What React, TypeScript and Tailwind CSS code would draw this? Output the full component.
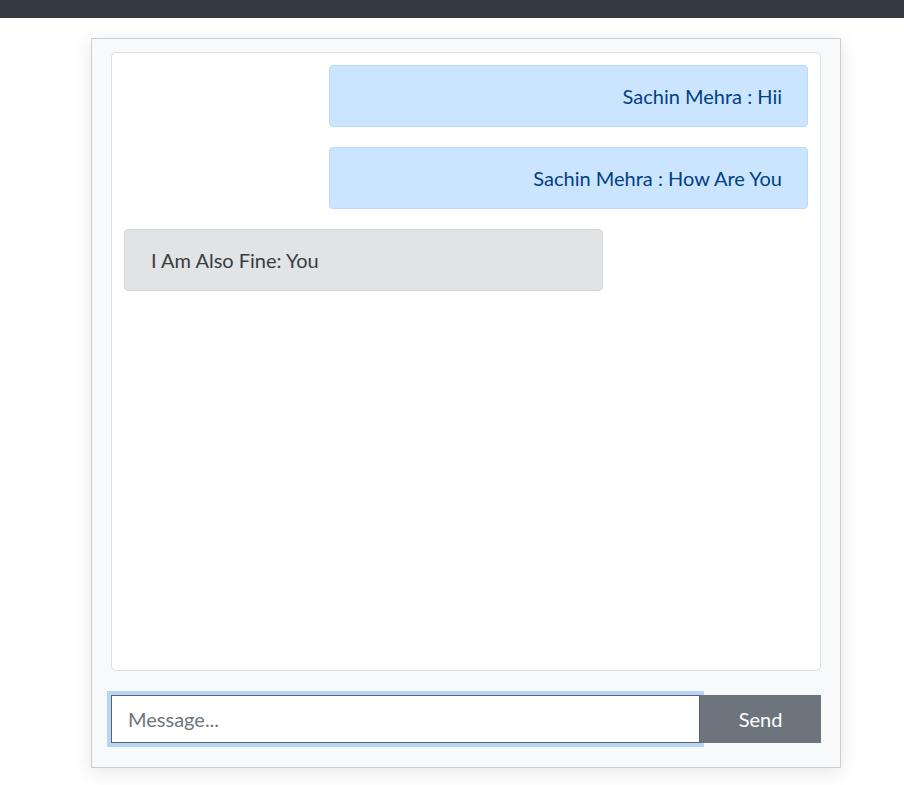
import React, { useState } from 'react';

type Msg = { id: number; text: string; mine: boolean };

const messages: Msg[] = [
  { id: 1, text: 'Sachin Mehra : Hii', mine: true },
  { id: 2, text: 'Sachin Mehra : How Are You', mine: true },
  { id: 3, text: 'I Am Also Fine: You', mine: false },
];

const App: React.FC = () => {
  const [draft, setDraft] = useState('');

  return (
    <div className="min-h-screen bg-white font-['Lato','Noto_Sans',sans-serif]">
      {/* Top nav strip */}
      <div className="h-[18px] bg-[#343a40]" />

      <div className="ml-[91px] mt-[20px] w-[750px] border border-[#cdcdcd] bg-[#f8f9fa] px-[19px] pt-[13px] pb-[24px] shadow-[0_4px_18px_rgba(0,0,0,0.1)]">
        {/* Message list */}
        <div className="flex h-[619px] flex-col gap-[20px] rounded-[5px] border border-[#dcdfe2] bg-white p-[12px]">
          {messages.map((m) =>
            m.mine ? (
              <div
                key={m.id}
                className="ml-auto w-[479px] rounded-[4px] border border-[#b8daff] bg-[#cce5ff] py-[15px] pr-[25px] text-right text-[20px] leading-[30px] text-[#004085]"
              >
                {m.text}
              </div>
            ) : (
              <div
                key={m.id}
                className="w-[479px] rounded-[4px] border border-[#d6d8db] bg-[#e2e3e5] py-[15px] pl-[26px] text-[20px] leading-[30px] text-[#383d41]"
              >
                {m.text}
              </div>
            )
          )}
        </div>

        {/* Composer */}
        <div className="mt-[24px] flex h-[48px]">
          <input
            value={draft}
            onChange={(e) => setDraft(e.target.value)}
            placeholder="Message..."
            className="h-full flex-1 border border-[#5c636a] bg-white px-[16px] text-[20px] text-[#495057] shadow-[0_0_0_4px_#b6d6f7] outline-none placeholder:text-[#6c757d]"
          />
          <button className="relative h-full w-[121px] bg-[#6c757d] text-[20px] text-white">
            Send
          </button>
        </div>
      </div>
    </div>
  );
};

export default App;
